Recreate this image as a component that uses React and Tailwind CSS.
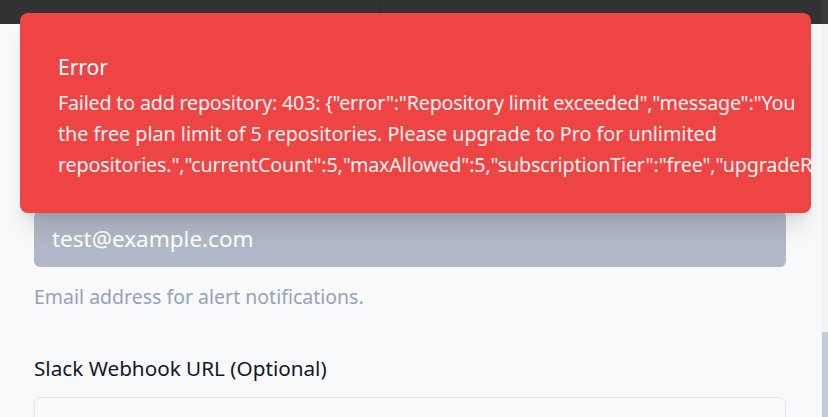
import React from "react";

const App = () => {
  const font = { fontFamily: '"Noto Sans", "Open Sans", sans-serif' };

  return (
    <div className="relative w-[828px] h-[417px] overflow-hidden bg-[#f8f9fa]" style={font}>
      {/* top bar */}
      <div className="flex h-[24px] bg-[#323232]">
        <div className="w-[380px] border-r border-[#2a2a2a]" />
        <div className="flex-1" />
        <div className="w-[6px] bg-[#3a3a3a]" />
      </div>

      <div className="flex h-[393px]">
        {/* form */}
        <div className="flex-1 pl-[34px] pr-[36px] pt-[187px]">
          <div className="h-[56px] rounded-md bg-[#b1b8c7] flex items-center px-[18px] text-[22.5px] text-white">
            test@example.com
          </div>
          <p className="mt-[16px] text-[19.5px] leading-[28px] text-[#94a3b8]">
            Email address for alert notifications.
          </p>
          <p className="mt-[43px] text-[20.7px] leading-[28px] text-[#111827]">
            Slack Webhook URL (Optional)
          </p>
          <div className="mt-[15px] h-[56px] rounded-md border border-[#e2e8f0] bg-[#f9fafb]" />
        </div>
        {/* scrollbar */}
        <div className="w-[6px] bg-[#f1f3f5] flex flex-col">
          <div className="h-[308px]" />
          <div className="flex-1 bg-[#c3ccd8]" />
        </div>
      </div>

      {/* error toast */}
      <div className="absolute left-[20px] top-[13px] w-[791px] h-[200px] rounded-lg bg-[#ef4444] shadow-xl overflow-hidden text-white px-[38px] pt-[40px]">
        <div className="text-[21px] leading-[28px]">Error</div>
        <div className="mt-[6px] text-[19.7px] leading-[31px] whitespace-nowrap text-[#fdf2f2]">
          <div className="tracking-[-0.2px]">Failed to add repository: 403: {'{"error":"Repository limit exceeded","message":"You'}</div>
          <div>the free plan limit of 5 repositories. Please upgrade to Pro for unlimited</div>
          <div className="tracking-[-0.15px]">{'repositories.","currentCount":5,"maxAllowed":5,"subscriptionTier":"free","upgradeRequired":true}'}</div>
        </div>
      </div>
    </div>
  );
};

export default App;
